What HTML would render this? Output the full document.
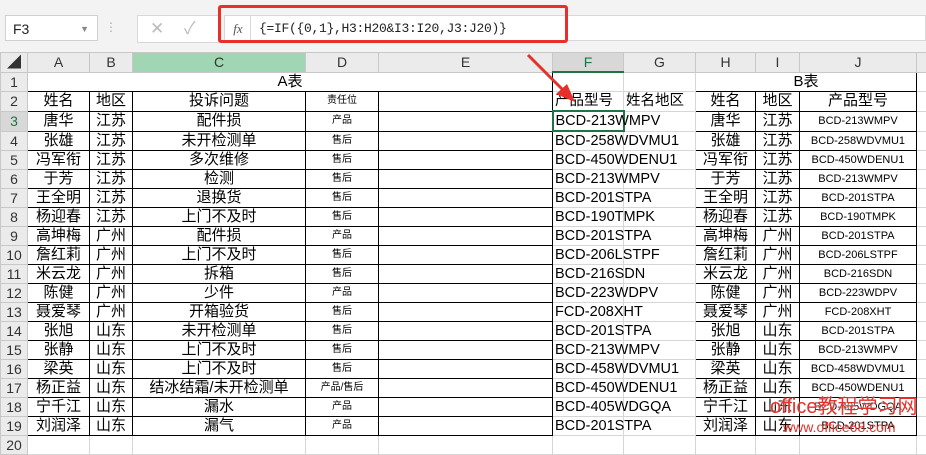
<!DOCTYPE html><html><head><meta charset="utf-8"><style>
body{margin:0;width:926px;height:442px;overflow:hidden;background:#fff;position:relative;font-family:"Liberation Sans","Noto Sans CJK SC",sans-serif}
.top{position:absolute;left:0;top:0;width:926px;height:52px;background:#f3f3f3}
.nb{position:absolute;left:5px;top:15px;width:93px;height:26px;background:#fff;border:1px solid #d0d0d0;font-size:14px;line-height:26px;padding-left:7px;box-sizing:border-box;color:#222}
.btns{position:absolute;left:137px;top:15px;width:80px;height:26px;background:#fff;border:1px solid #d8d8d8;color:#bbb;font-size:17px;line-height:26px}
.fx{position:absolute;left:218px;top:5px;width:350px;height:38px;border:3px solid #e8302a;border-radius:3px;box-sizing:border-box}
.fxi{position:absolute;left:224px;top:15px;width:28px;height:26px;background:#fff;border:1px solid #d8d8d8;font-style:italic;font-family:"Liberation Serif",serif;font-size:13px;color:#555;line-height:26px;text-align:center;box-sizing:border-box}
.ft{position:absolute;left:250px;top:15px;width:676px;height:26px;background:#fff;border:1px solid #d8d8d8;font-family:"Liberation Mono",monospace;font-size:13px;line-height:26px;padding-left:8px;color:#222;box-sizing:border-box;letter-spacing:-0.3px}
table{position:absolute;left:0;top:52px;border-collapse:collapse;table-layout:fixed;width:936px}
td{height:18px;padding:0;border:1px solid #d6d6d6;text-align:center;font-size:15px;line-height:18px;white-space:nowrap;overflow:hidden;color:#000}
tr.h td{background:#ebebeb;color:#333;font-size:14px;border-color:#c8c8c8}
td.rh{background:#ebebeb;color:#333;font-size:14px;border-color:#c8c8c8}
td.b{border:1px solid #000}
td.s{font-size:10px}
td.j{font-size:11px}
td.f{text-align:left;font-size:14.5px;padding-left:2px;overflow:visible}
</style></head><body>
<div class="top"></div>
<div class="nb">F3<span style="position:absolute;right:8px;color:#888;font-size:9px">▼</span></div>
<div style="position:absolute;left:105px;top:20px;color:#aaa;font-size:12px">⋮</div>
<div class="btns"><span style="position:absolute;left:12px">✕</span><span style="position:absolute;left:46px">✓</span></div>
<div class="fxi">fx</div>
<div class="ft">{=IF({0,1},H3:H20&amp;I3:I20,J3:J20)}</div>
<div class="fx"></div>
<table>
<colgroup><col style="width:27px"><col style="width:62px"><col style="width:43px"><col style="width:173px"><col style="width:73px"><col style="width:174px"><col style="width:71px"><col style="width:72px"><col style="width:60px"><col style="width:44px"><col style="width:117px"><col style="width:20px"></colgroup>
<tr class="h"><td>◢</td><td>A</td><td>B</td><td style="background:#a0d6b4">C</td><td>D</td><td>E</td><td style="background:#d8d8d8;border-bottom:2px solid #217346;color:#217346">F</td><td>G</td><td>H</td><td>I</td><td>J</td><td></td></tr>
<tr><td class="rh">1</td><td class="b" colspan="5">A表</td><td></td><td></td><td class="b" colspan="3">B表</td><td></td></tr>
<tr><td class="rh">2</td><td class="b">姓名</td><td class="b">地区</td><td class="b">投诉问题</td><td class="b s">责任位</td><td class="b"></td><td class="f">产品型号</td><td class="f">姓名地区</td><td class="b">姓名</td><td class="b">地区</td><td class="b">产品型号</td><td></td></tr>
<tr><td class="rh" style="color:#217346;background:#d8d8d8">3</td><td class="b">唐华</td><td class="b">江苏</td><td class="b">配件损</td><td class="b s">产品</td><td class="b"></td><td class="f" style="border:2px solid #217346">BCD-213WMPV</td><td></td><td class="b">唐华</td><td class="b">江苏</td><td class="b j">BCD-213WMPV</td><td></td></tr>
<tr><td class="rh">4</td><td class="b">张雄</td><td class="b">江苏</td><td class="b">未开检测单</td><td class="b s">售后</td><td class="b"></td><td class="f">BCD-258WDVMU1</td><td></td><td class="b">张雄</td><td class="b">江苏</td><td class="b j">BCD-258WDVMU1</td><td></td></tr>
<tr><td class="rh">5</td><td class="b">冯军衔</td><td class="b">江苏</td><td class="b">多次维修</td><td class="b s">售后</td><td class="b"></td><td class="f">BCD-450WDENU1</td><td></td><td class="b">冯军衔</td><td class="b">江苏</td><td class="b j">BCD-450WDENU1</td><td></td></tr>
<tr><td class="rh">6</td><td class="b">于芳</td><td class="b">江苏</td><td class="b">检测</td><td class="b s">售后</td><td class="b"></td><td class="f">BCD-213WMPV</td><td></td><td class="b">于芳</td><td class="b">江苏</td><td class="b j">BCD-213WMPV</td><td></td></tr>
<tr><td class="rh">7</td><td class="b">王全明</td><td class="b">江苏</td><td class="b">退换货</td><td class="b s">售后</td><td class="b"></td><td class="f">BCD-201STPA</td><td></td><td class="b">王全明</td><td class="b">江苏</td><td class="b j">BCD-201STPA</td><td></td></tr>
<tr><td class="rh">8</td><td class="b">杨迎春</td><td class="b">江苏</td><td class="b">上门不及时</td><td class="b s">售后</td><td class="b"></td><td class="f">BCD-190TMPK</td><td></td><td class="b">杨迎春</td><td class="b">江苏</td><td class="b j">BCD-190TMPK</td><td></td></tr>
<tr><td class="rh">9</td><td class="b">高坤梅</td><td class="b">广州</td><td class="b">配件损</td><td class="b s">产品</td><td class="b"></td><td class="f">BCD-201STPA</td><td></td><td class="b">高坤梅</td><td class="b">广州</td><td class="b j">BCD-201STPA</td><td></td></tr>
<tr><td class="rh">10</td><td class="b">詹红莉</td><td class="b">广州</td><td class="b">上门不及时</td><td class="b s">售后</td><td class="b"></td><td class="f">BCD-206LSTPF</td><td></td><td class="b">詹红莉</td><td class="b">广州</td><td class="b j">BCD-206LSTPF</td><td></td></tr>
<tr><td class="rh">11</td><td class="b">米云龙</td><td class="b">广州</td><td class="b">拆箱</td><td class="b s">售后</td><td class="b"></td><td class="f">BCD-216SDN</td><td></td><td class="b">米云龙</td><td class="b">广州</td><td class="b j">BCD-216SDN</td><td></td></tr>
<tr><td class="rh">12</td><td class="b">陈健</td><td class="b">广州</td><td class="b">少件</td><td class="b s">产品</td><td class="b"></td><td class="f">BCD-223WDPV</td><td></td><td class="b">陈健</td><td class="b">广州</td><td class="b j">BCD-223WDPV</td><td></td></tr>
<tr><td class="rh">13</td><td class="b">聂爱琴</td><td class="b">广州</td><td class="b">开箱验货</td><td class="b s">售后</td><td class="b"></td><td class="f">FCD-208XHT</td><td></td><td class="b">聂爱琴</td><td class="b">广州</td><td class="b j">FCD-208XHT</td><td></td></tr>
<tr><td class="rh">14</td><td class="b">张旭</td><td class="b">山东</td><td class="b">未开检测单</td><td class="b s">售后</td><td class="b"></td><td class="f">BCD-201STPA</td><td></td><td class="b">张旭</td><td class="b">山东</td><td class="b j">BCD-201STPA</td><td></td></tr>
<tr><td class="rh">15</td><td class="b">张静</td><td class="b">山东</td><td class="b">上门不及时</td><td class="b s">售后</td><td class="b"></td><td class="f">BCD-213WMPV</td><td></td><td class="b">张静</td><td class="b">山东</td><td class="b j">BCD-213WMPV</td><td></td></tr>
<tr><td class="rh">16</td><td class="b">梁英</td><td class="b">山东</td><td class="b">上门不及时</td><td class="b s">售后</td><td class="b"></td><td class="f">BCD-458WDVMU1</td><td></td><td class="b">梁英</td><td class="b">山东</td><td class="b j">BCD-458WDVMU1</td><td></td></tr>
<tr><td class="rh">17</td><td class="b">杨正益</td><td class="b">山东</td><td class="b">结冰结霜/未开检测单</td><td class="b s">产品/售后</td><td class="b"></td><td class="f">BCD-450WDENU1</td><td></td><td class="b">杨正益</td><td class="b">山东</td><td class="b j">BCD-450WDENU1</td><td></td></tr>
<tr><td class="rh">18</td><td class="b">宁千江</td><td class="b">山东</td><td class="b">漏水</td><td class="b s">产品</td><td class="b"></td><td class="f">BCD-405WDGQA</td><td></td><td class="b">宁千江</td><td class="b">山东</td><td class="b j">BCD-405WDGQA</td><td></td></tr>
<tr><td class="rh">19</td><td class="b">刘润泽</td><td class="b">山东</td><td class="b">漏气</td><td class="b s">产品</td><td class="b"></td><td class="f">BCD-201STPA</td><td></td><td class="b">刘润泽</td><td class="b">山东</td><td class="b j">BCD-201STPA</td><td></td></tr>
<tr><td class="rh">20</td><td></td><td></td><td></td><td></td><td></td><td></td><td></td><td></td><td></td><td></td><td></td></tr>
</table>
<svg style="position:absolute;left:0;top:0" width="926" height="442"><line x1="528" y1="55" x2="565" y2="92" stroke="#e8302a" stroke-width="3"/><polygon points="575,102 556,94 567,84" fill="#e8302a"/></svg>
<div style="position:absolute;left:770px;top:396px;color:#e8302a;font-size:20px;line-height:22px;white-space:nowrap;text-shadow:0 0 2px #fff">office教程学习网</div>
<div style="position:absolute;left:783px;top:419px;color:#e8302a;font-size:14px;line-height:16px;white-space:nowrap">www.office68.com</div>
</body></html>
